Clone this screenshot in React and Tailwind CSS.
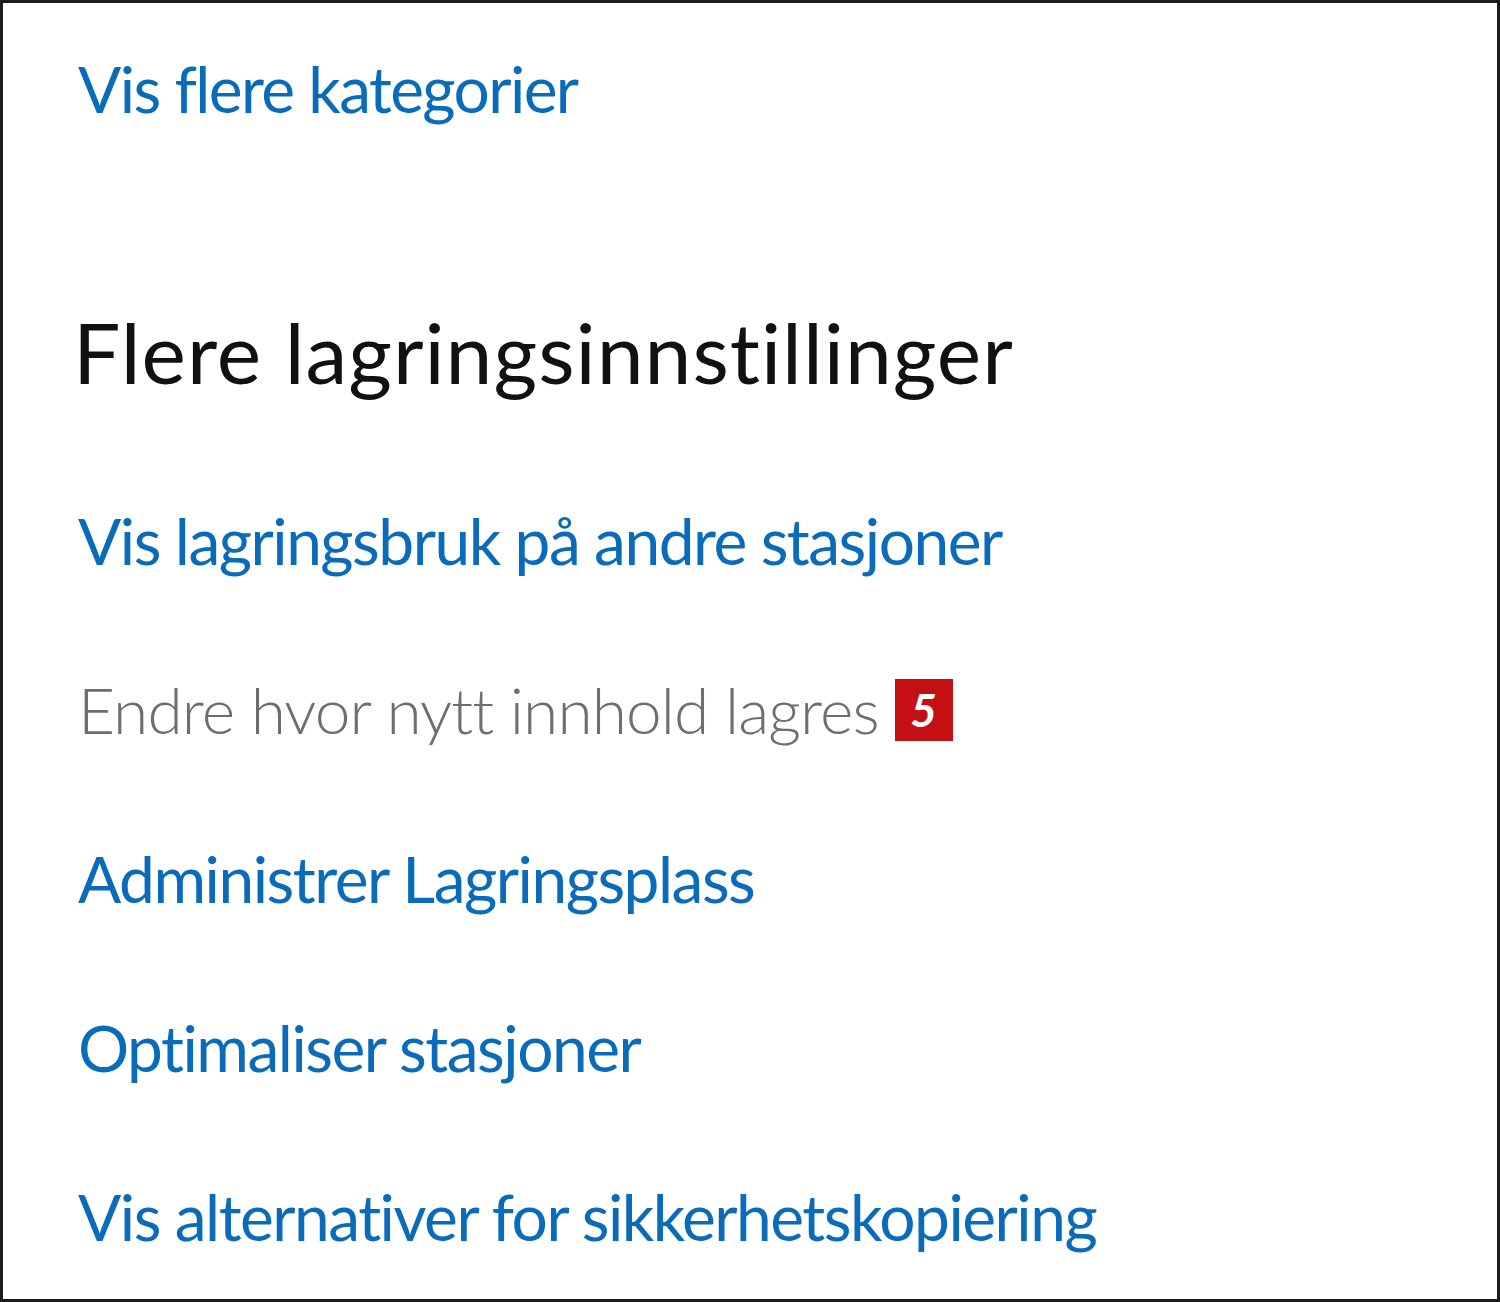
export default function App() {
  const links = [
    { label: 'Vis lagringsbruk på andre stasjoner' },
    { label: 'Endre hvor nytt innhold lagres', muted: true, badge: '5' },
    { label: 'Administrer Lagringsplass' },
    { label: 'Optimaliser stasjoner' },
    { label: 'Vis alternativer for sikkerhetskopiering' },
  ];

  return (
    <div className="w-[1500px] h-[1302px] bg-white border-[3px] border-[#1c1c1c] overflow-hidden [font-variant-ligatures:none]" style={{ fontFamily: 'Lato, "Open Sans", sans-serif' }}>
      <div className="pl-[75px] pt-[1px]">
        <a className="block text-[64px] leading-[169px] text-[#0a6bbb] tracking-[-1.6px]">Vis flere kategorier</a>

        <h2 className="mt-[119px] -ml-[5px] text-[84px] leading-[120px] text-[#111] tracking-[1px]">Flere lagringsinnstillinger</h2>

        <div className="mt-[44px] flex flex-col">
          {links.map((l) => (
            <div key={l.label} className="flex items-center h-[169px] text-[64px] leading-[169px]">
              <span className={l.muted ? 'text-[#6e6e6e] font-light tracking-[-0.9px]' : 'text-[#0a6bbb] tracking-[-1.5px]'}>{l.label}</span>
              {l.badge && (
                <span className="ml-[16px] w-[58px] h-[62px] bg-[#c40f15] text-white text-[46px] leading-[62px] font-bold italic flex items-center justify-center">
                  {l.badge}
                </span>
              )}
            </div>
          ))}
        </div>
      </div>
    </div>
  );
}
